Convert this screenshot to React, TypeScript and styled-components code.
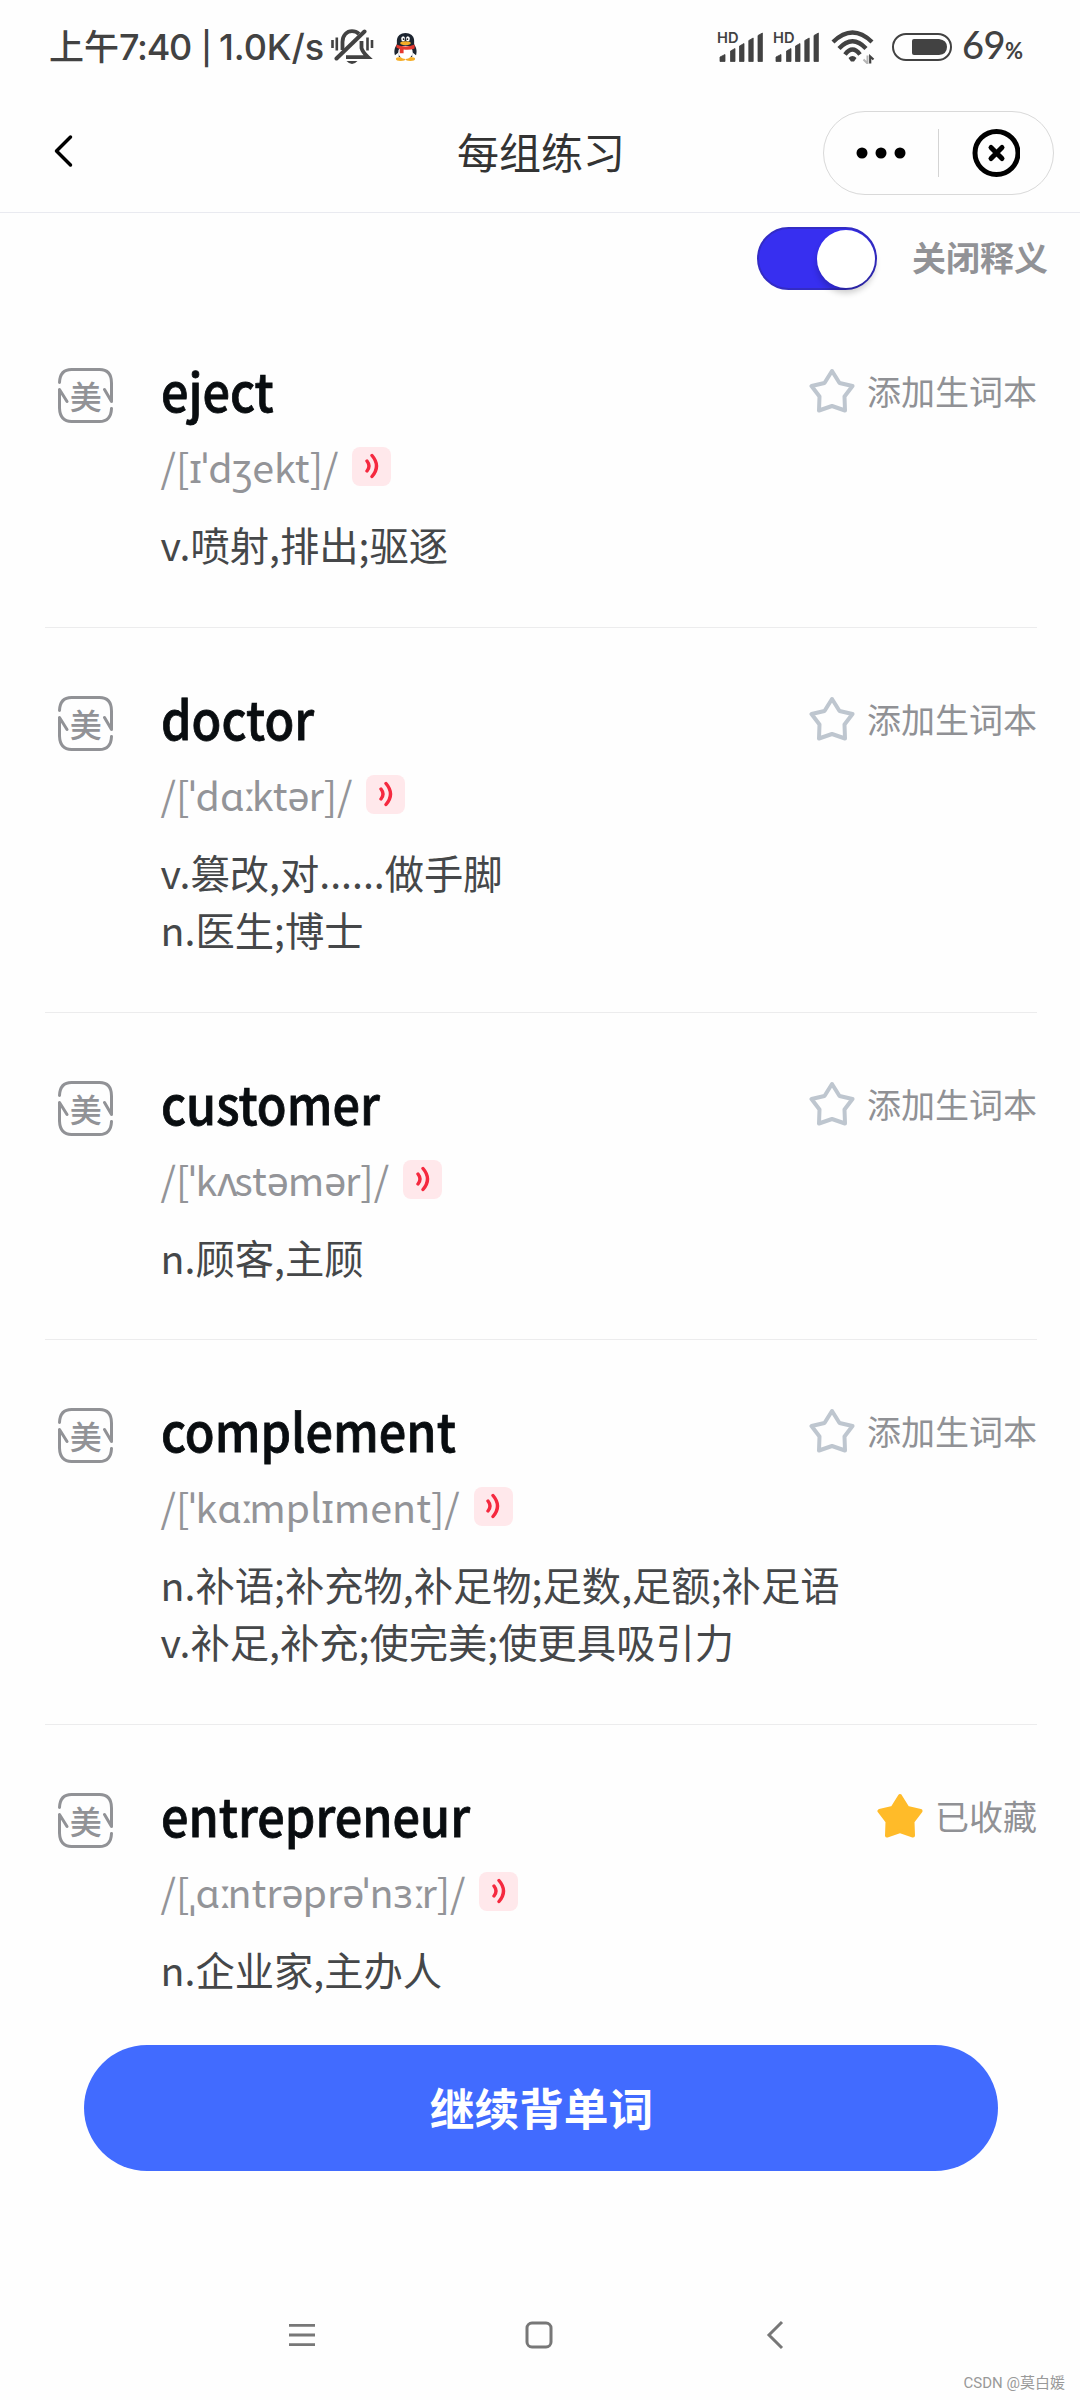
import React from "react";
import styled, { createGlobalStyle } from "styled-components";

const Global = createGlobalStyle`
  * { box-sizing: border-box; }
  body { margin: 0; background: #fefefe; }
`;

const Screen = styled.div`
  width: 1080px;
  height: 2400px;
  overflow: hidden;
  display: flex;
  flex-direction: column;
  background: #fefefe;
  font-family: "Noto Sans CJK SC", sans-serif;
`;

const StatusBar = styled.header`
  height: 94px;
  flex: none;
  display: flex;
  align-items: center;
  justify-content: space-between;
  padding: 0 50px 0 49px;
  color: #424242;
`;
const StatusGroup = styled.div`
  display: flex;
  align-items: center;
`;
const Clock = styled.div`
  display: flex;
  align-items: baseline;
  width: 282px;
  font-family: Inter, sans-serif;
  font-size: 36px;
  line-height: 44px;
  font-weight: 500;
  white-space: nowrap;
`;
const Meridiem = styled.span`
  width: 70px;
  font-family: "Noto Sans CJK SC", sans-serif;
  font-size: 35px;
`;
const Time = styled.span`
  width: 82px;
  letter-spacing: -1.3px;
`;
const Bar = styled.span`
  width: 18px;
  font-size: 32px;
`;
const Rate = styled.span`
  letter-spacing: -0.1px;
`;
const PenguinSlot = styled.span`
  display: flex;
  margin-left: 20px;
`;
const StatusIcons = styled(StatusGroup)`
  gap: 10px;
`;
const WifiSlot = styled.span`
  display: flex;
  margin: 0 6px 0 2px;
`;
const SignalSvg = styled.svg`
  overflow: visible;
`;
const Percent = styled.span`
  width: 68px;
  font-family: Lato, sans-serif;
  font-weight: 500;
  font-size: 38px;
  line-height: 44px;
  letter-spacing: -0.6px;
  white-space: nowrap;
`;
const PercentSign = styled.small`
  font-size: 22px;
  font-weight: 700;
`;

const NavBar = styled.nav`
  height: 119px;
  flex: none;
  display: grid;
  grid-template-columns: 1fr 232px 1fr;
  align-items: center;
  padding: 0 26px;
  border-bottom: 1px solid #e9eaf0;
`;
const BackButton = styled.div`
  display: flex;
  padding: 0 0 4px 26px;
`;
const Title = styled.h1`
  margin: 0;
  padding: 0 0 5px 2px;
  font-size: 42px;
  line-height: 60px;
  font-weight: 400;
  color: #333;
  text-align: center;
  white-space: nowrap;
`;
const Capsule = styled.div`
  justify-self: end;
  width: 231px;
  height: 84px;
  border: 1px solid #d9d9d9;
  border-radius: 42px;
  display: flex;
  align-items: center;
`;
const CapsuleHalf = styled.div`
  flex: 1;
  display: flex;
  justify-content: center;
`;
const CapsuleRule = styled.div`
  width: 1px;
  height: 48px;
  background: #d4d4d4;
`;

const ToggleRow = styled.div`
  height: 87px;
  flex: none;
  display: flex;
  justify-content: flex-end;
  align-items: flex-start;
  padding: 14px 32px 0 0;
`;
const Track = styled.div`
  width: 120px;
  height: 63px;
  border-radius: 32px;
  background: #372ff0;
  border: 2px solid #332cc4;
  display: flex;
  justify-content: flex-end;
  align-items: center;
`;
const Knob = styled.div`
  width: 58px;
  height: 58px;
  border-radius: 50%;
  background: #fff;
  box-shadow: 0 5px 6px rgba(0, 0, 0, 0.2);
`;
const ToggleLabel = styled.span`
  margin-left: 35px;
  font-size: 34px;
  line-height: 60px;
  font-weight: 700;
  color: #919296;
`;

const List = styled.main`
  flex: none;
  padding: 0 43px 0 45px;
`;
const Entry = styled.article<{ $height: number }>`
  height: ${(p) => p.$height}px;
  display: flex;
  padding-left: 13px;
  border-bottom: 1px solid #ececed;
  &:last-child { border-bottom: none; }
`;
const AccentSlot = styled.div`
  width: 102.5px;
  flex: none;
  padding-top: 68px;
`;
const Body = styled.div`
  flex: 1;
  display: flex;
  flex-direction: column;
  padding-top: 52px;
`;
const HeadRow = styled.div`
  height: 76px;
  display: flex;
  justify-content: space-between;
  align-items: center;
`;
const Word = styled.h2`
  margin: -2px 0 0;
  font-size: 52.5px;
  line-height: 76px;
  font-weight: 500;
  color: #090d10;
  -webkit-text-stroke: 0.8px #090d10;
  transform: scaleX(0.925);
  transform-origin: left center;
`;
const Save = styled.div`
  margin-top: 2px;
  display: flex;
  align-items: center;
  gap: 12px;
  font-size: 34px;
  line-height: 50px;
  color: #909195;
`;
const PhoneticRow = styled.div`
  height: 56px;
  margin-top: 10px;
  display: flex;
  align-items: center;
  gap: 14px;
`;
const Phonetic = styled.span`
  font-family: "Noto Sans CJK SC", "Noto Sans", sans-serif;
  font-size: 39.4px;
  line-height: 56px;
  color: #939498;
  white-space: nowrap;
`;
const Kerned = styled.span<{ $by: number }>`
  letter-spacing: ${(p) => p.$by}px;
`;
const Speaker = styled.span`
  width: 39px;
  height: 39px;
  border-radius: 8px;
  background: #ffe8eb;
  display: flex;
  align-items: center;
  justify-content: center;
`;
const Meanings = styled.div`
  margin-top: 21px;
  font-size: 39.3px;
  line-height: 57px;
  color: #454749;
  white-space: nowrap;
`;

const ContinueButton = styled.button`
  flex: none;
  width: 914px;
  height: 126px;
  margin: 0 0 0 84px;
  padding: 0 0 4px 1px;
  border: 0;
  border-radius: 63px;
  background: #416bff;
  color: #fff;
  font-family: inherit;
  font-size: 44.7px;
  font-weight: 700;
`;

const SystemNav = styled.footer`
  flex: none;
  height: 80px;
  margin-top: 124px;
  padding: 0 291px 0 288px;
  display: flex;
  justify-content: space-between;
  align-items: center;
`;
const Watermark = styled.div`
  flex: none;
  align-self: flex-end;
  margin: -2px 15px 0 0;
  font-family: Roboto, "Noto Sans CJK SC", sans-serif;
  font-size: 15px;
  line-height: 20px;
  color: #999;
`;

const MutedBell = () => (
  <svg width="43" height="36" viewBox="0 0 43 36" fill="none" stroke="#424242">
    <path d="M11.500 21V13C11.500 6 16 2.200 21 2.200Q25 2.200 28 5" strokeWidth="3.8" />
    <path d="M30.500 12V19Q31.500 23 37 28.200H15" strokeWidth="3.8" />
    <path d="M5.500 29.500L33.500 2.500" strokeWidth="4" strokeLinecap="round" />
    <path d="M1.500 11V19M5.800 8.500V21.500M36.500 8.500V21.500M41 11V19" strokeWidth="2.6" />
    <path d="M15.500 32H26.500Q21 38 15.500 32Z" fill="#424242" stroke="none" />
  </svg>
);

const Penguin = () => (
  <svg width="23" height="28" viewBox="0 0 24 29">
    <ellipse cx="7" cy="27" rx="5" ry="2" fill="#f5ad27" />
    <ellipse cx="17" cy="27" rx="5" ry="2" fill="#f5ad27" />
    <path d="M3 12C0 16 0 20 1 23L5 20V25H19V20L23 23C24 20 24 16 21 12Z" fill="#1d2530" />
    <ellipse cx="12" cy="20" rx="7.5" ry="7" fill="#fff" />
    <path d="M3 13V8C3 3 7 0 12 0S21 3 21 8V13Z" fill="#1d2530" />
    <ellipse cx="9.5" cy="6" rx="2" ry="2.8" fill="#fff" />
    <ellipse cx="14.5" cy="6" rx="2" ry="2.8" fill="#fff" />
    <circle cx="10" cy="6.2" r="0.9" fill="#111" />
    <circle cx="14" cy="6.2" r="0.9" fill="#111" />
    <ellipse cx="12" cy="10.5" rx="5.5" ry="1.9" fill="#f5ad27" />
    <path d="M2.5 12Q12 16 21.5 12V16Q16 18 10 17V21H6V16.5Q4 16 2.5 15Z" fill="#e5382f" />
  </svg>
);

const Signal = () => (
  <SignalSvg width="46" height="32" viewBox="0 0 46 32" fill="#424242">
    <text x="0" y="12" fontFamily="Inter, sans-serif" fontSize="14.5" fontWeight="600" textLength="21.5" lengthAdjust="spacingAndGlyphs">HD</text>
    <path
      d="M3 30.500V26L8 23.500V30.500ZM13.500 30.500V20L18 17.500V30.500ZM22.500 30.500V15L27 12.500V30.500ZM31.800 30.500V9.500L36.200 7V30.500ZM41 30.500V4.500L45.400 2V30.500Z"
      stroke="#424242"
      strokeWidth="0.800"
      strokeLinejoin="round"
    />
  </SignalSvg>
);

const Wifi = () => (
  <svg width="44" height="34" viewBox="0 0 44 34" fill="none" stroke="#424242" strokeWidth="4.300">
    <path d="M2 12Q21.500 -7 41 12M8 18.500Q21.500 4 35 18.500M14 24.500Q21.500 14.500 29 24.500" />
    <path d="M17.500 28Q21.500 24 25.500 28L23 31.500H20Z" fill="#424242" stroke="none" />
    <path d="M36.500 25.500V33.500L32.500 29.500" stroke="#b5b5b5" strokeWidth="2" />
    <path d="M39.200 33.500V26.500L42.500 29.500" strokeWidth="2.200" />
  </svg>
);

const Battery = () => (
  <svg width="61" height="28" viewBox="-1 0 61 28">
    <rect x="1" y="1" width="58" height="26" rx="13" fill="none" stroke="#424242" strokeWidth="2" />
    <path d="M22 6H47Q55 7 55 14T47 22H22Q20 22 20 20V8Q20 6 22 6Z" fill="#424242" />
  </svg>
);

const AccentBadge = () => (
  <svg width="55" height="55" viewBox="0 0 55 55" fill="none" stroke="#919296" strokeWidth="3" strokeLinecap="round" strokeLinejoin="round">
    <path d="M1.500 14.500Q2 1.500 13.500 1.500H41.500Q53.500 1.500 53.500 15V33.500L46.500 21.500" />
    <path d="M9 33.500L1.500 21.500V40Q2 53.500 13.500 53.500H41.500Q53 53.500 53.500 40.500" />
    <text x="27.800" y="40.500" textAnchor="middle" fontFamily="Noto Sans CJK SC, sans-serif" fontSize="32" fontWeight="500" fill="#919296" stroke="none">美</text>
  </svg>
);

const Star = ({ filled }: { filled?: boolean }) => (
  <svg width="46" height="46" viewBox="0 0 46 46">
    <path
      d="M23 3L30.500 15L43.500 18L35.500 28.500L36 42.500L23 38L10 42.500L10.500 28.500L2.500 18L15.500 15Z"
      fill={filled ? "#ffbb29" : "none"}
      stroke={filled ? "#ffbb29" : "#bec6cf"}
      strokeWidth="4"
      strokeLinejoin="round"
    />
  </svg>
);

const SoundWaves = () => (
  <svg width="16" height="26" viewBox="0 0 16 26" fill="none" stroke="#f5293f" strokeWidth="3.400" strokeLinecap="round">
    <path d="M3 8Q7 13 3 18M8 2.500Q17 13 8 23.500" />
  </svg>
);

interface WordEntry {
  word: string;
  phonetic: string;
  meanings: string[];
  height: number;
  saved?: boolean;
}

const entries: WordEntry[] = [
  { word: "eject", phonetic: "/[ɪˈdʒekt]/", meanings: ["v.喷射,排出;驱逐"], height: 328 },
  { word: "doctor", phonetic: "/[ˈdɑːktər]/", meanings: ["v.篡改,对......做手脚", "n.医生;博士"], height: 385 },
  { word: "customer", phonetic: "/[ˈkʌstəmər]/", meanings: ["n.顾客,主顾"], height: 327 },
  { word: "complement", phonetic: "/[ˈkɑːmplɪment]/", meanings: ["n.补语;补充物,补足物;足数,足额;补足语", "v.补足,补充;使完美;使更具吸引力"], height: 385 },
  { word: "entrepreneur", phonetic: "/[ˌɑːntrəprəˈnɜːr]/", meanings: ["n.企业家,主办人"], height: 320, saved: true },
];

// Per-letter spacing for the IPA glyphs whose side bearings are wide.
const kerning: Record<string, number> = { "ː": -4, "ʌ": -3, "ɑ": -1.5, "ə": -1.3 };

const renderPhonetic = (text: string) =>
  text.split(/([ːʌɑə])/).map((part, i) => (i % 2 ? <Kerned key={i} $by={kerning[part]}>{part}</Kerned> : part));

export default function App() {
  return (
    <Screen>
      <Global />
      <StatusBar>
        <StatusGroup>
          <Clock>
            <Meridiem>上午</Meridiem>
            <Time>7:40</Time>
            <Bar>|</Bar>
            <Rate>1.0K/s</Rate>
          </Clock>
          <MutedBell />
          <PenguinSlot><Penguin /></PenguinSlot>
        </StatusGroup>
        <StatusIcons>
          <Signal />
          <Signal />
          <WifiSlot><Wifi /></WifiSlot>
          <Battery />
          <Percent>69<PercentSign>%</PercentSign></Percent>
        </StatusIcons>
      </StatusBar>
      <NavBar>
        <BackButton>
          <svg width="22" height="34" viewBox="0 0 22 34" fill="none" stroke="#000" strokeWidth="3.500" strokeLinecap="round" strokeLinejoin="round">
            <path d="M18.500 3L4.500 17L18.500 31" />
          </svg>
        </BackButton>
        <Title>每组练习</Title>
        <Capsule>
          <CapsuleHalf>
            <svg width="50" height="12" viewBox="0 0 50 12"><circle cx="6" cy="6" r="5.500" /><circle cx="25" cy="6" r="5.500" /><circle cx="44" cy="6" r="5.500" /></svg>
          </CapsuleHalf>
          <CapsuleRule />
          <CapsuleHalf>
            <svg width="48" height="48" viewBox="0 0 48 48" fill="none" stroke="#000" strokeWidth="5"><circle cx="24.500" cy="24" r="21.500" /><path d="M19 18.500L30 29.500M30 18.500L19 29.500" strokeLinecap="round" /></svg>
          </CapsuleHalf>
        </Capsule>
      </NavBar>
      <ToggleRow>
        <Track><Knob /></Track>
        <ToggleLabel>关闭释义</ToggleLabel>
      </ToggleRow>
      <List>
        {entries.map((e) => (
          <Entry key={e.word} $height={e.height}>
            <AccentSlot><AccentBadge /></AccentSlot>
            <Body>
              <HeadRow>
                <Word>{e.word}</Word>
                <Save><Star filled={e.saved} />{e.saved ? "已收藏" : "添加生词本"}</Save>
              </HeadRow>
              <PhoneticRow>
                <Phonetic>{renderPhonetic(e.phonetic)}</Phonetic>
                <Speaker><SoundWaves /></Speaker>
              </PhoneticRow>
              <Meanings>{e.meanings.map((m) => <div key={m}>{m}</div>)}</Meanings>
            </Body>
          </Entry>
        ))}
      </List>
      <ContinueButton>继续背单词</ContinueButton>
      <SystemNav>
        <svg width="28" height="30" viewBox="0 0 28 30" stroke="#777" strokeWidth="2.800"><path d="M1 5.300H27M1 15H27M1 24.700H27" /></svg>
        <svg width="28" height="30" viewBox="0 0 28 30" fill="none" stroke="#777" strokeWidth="3"><rect x="2" y="3" width="24" height="24" rx="5" /></svg>
        <svg width="28" height="30" viewBox="0 0 28 30" fill="none" stroke="#777" strokeWidth="3"><path d="M21 2L8 15L21 28" /></svg>
      </SystemNav>
      <Watermark>CSDN @莫白媛</Watermark>
    </Screen>
  );
}
